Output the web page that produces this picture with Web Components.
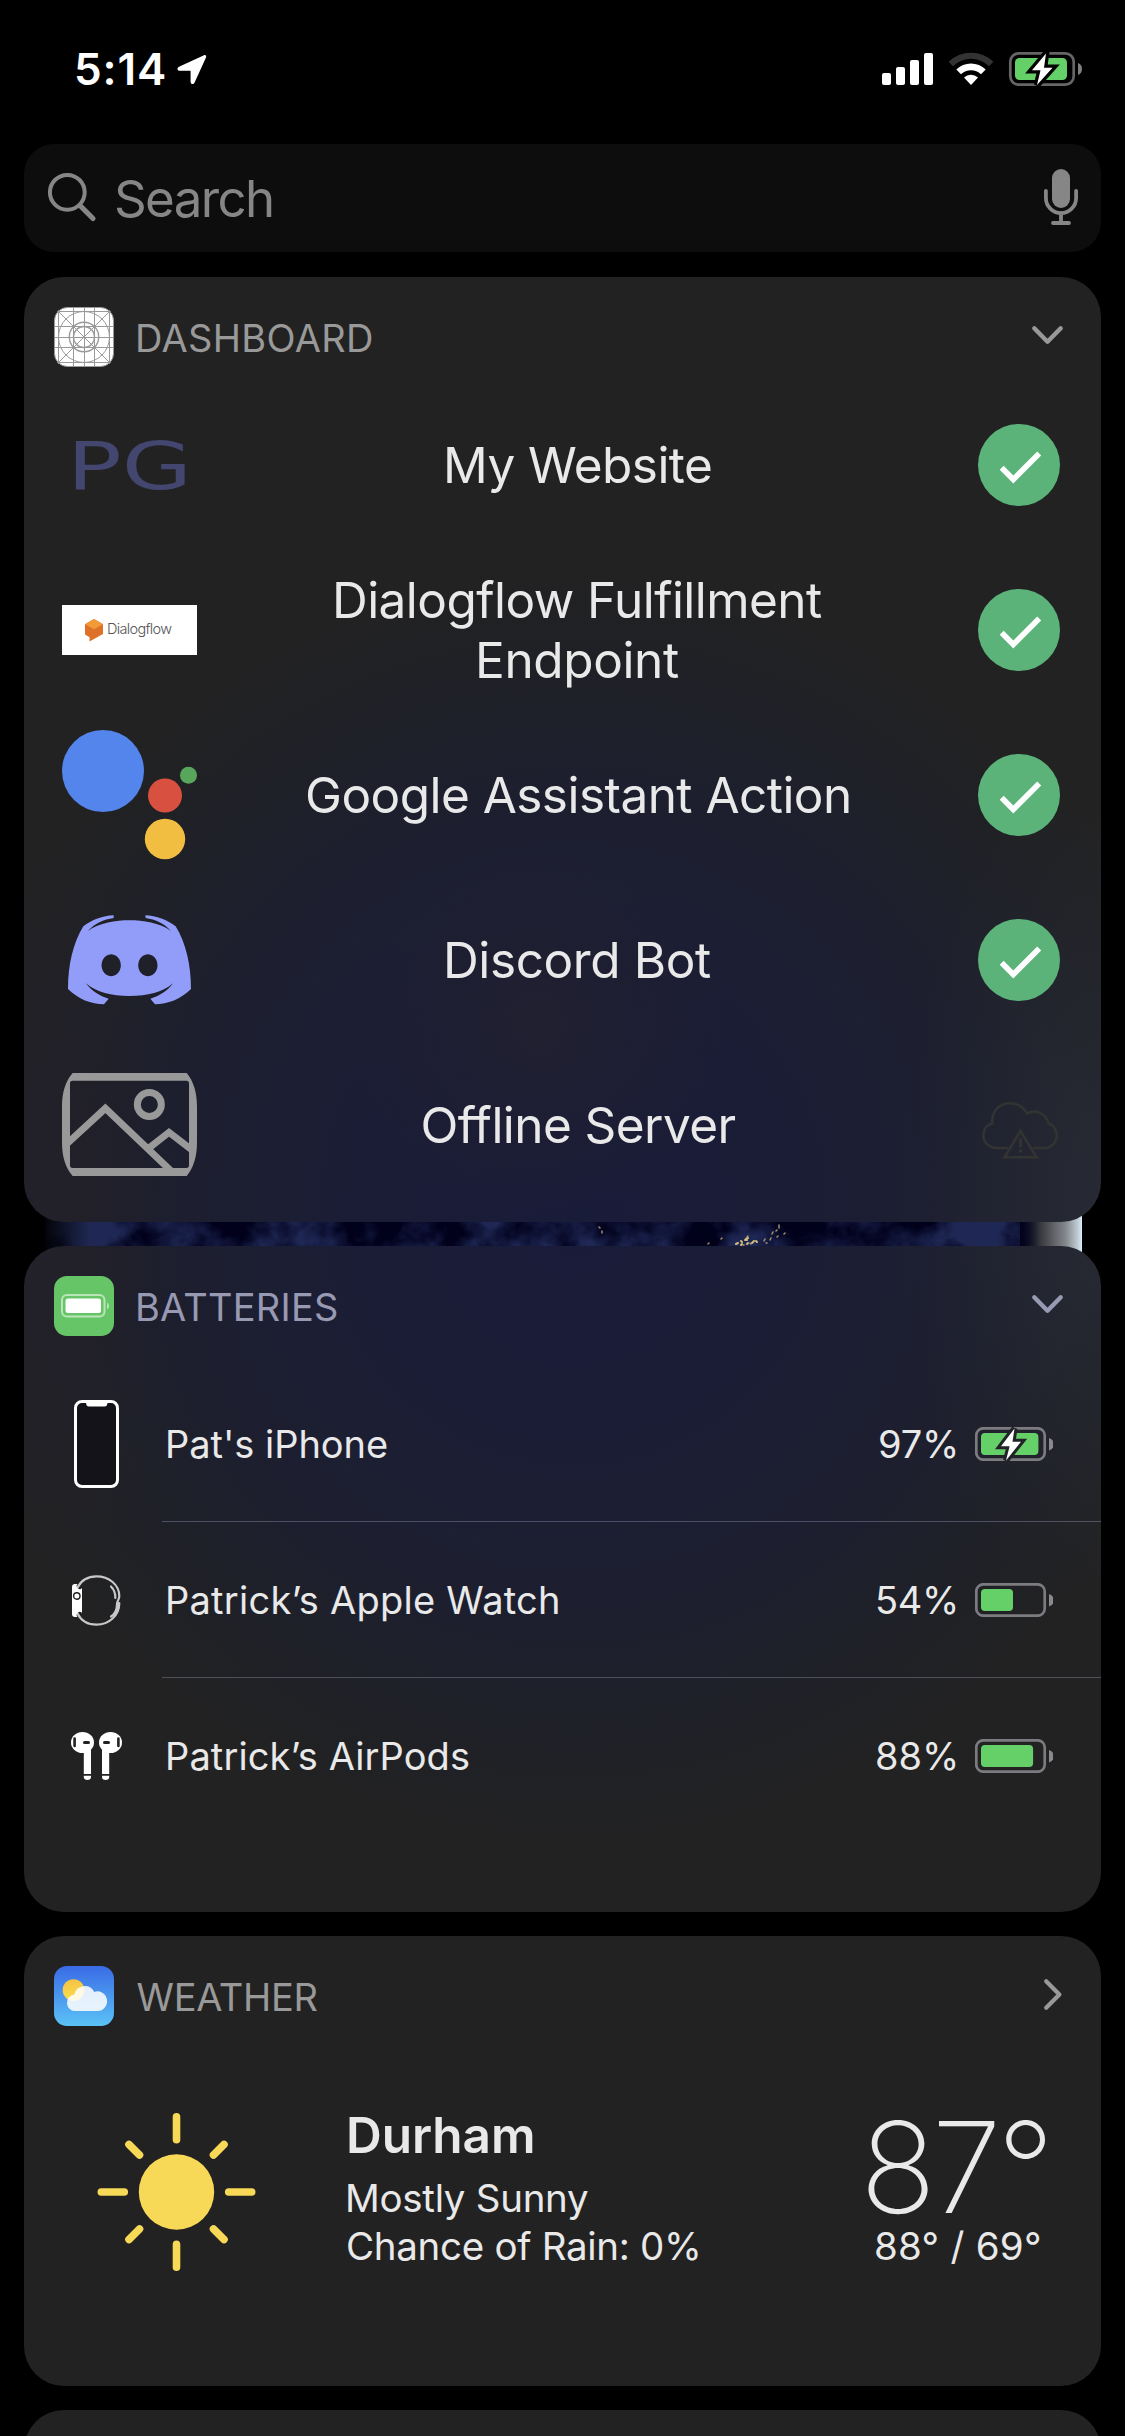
<!DOCTYPE html>
<html lang="en">
<head>
<meta charset="utf-8">
<title>Today View</title>
<style>
  html, body { margin: 0; background: #000; }
  body { width: 1125px; height: 2436px; overflow: hidden; font-family: Inter, "Liberation Sans", sans-serif; color: #e9e9e9; }
</style>
</head>
<body>
<today-view></today-view>
<script>
const define = (name, html, setup) => {
  const template = document.createElement('template');
  template.innerHTML = html;
  customElements.define(name, class extends HTMLElement {
    connectedCallback() {
      if (this.shadowRoot) return;
      const root = this.attachShadow({ mode: 'open' });
      root.append(template.content.cloneNode(true));
      if (setup) setup(this, root);
    }
  });
};

/* One line of text, tracked so that its ink spans exactly `w` pixels. */
const pen = document.createElement('canvas').getContext('2d');
define('fit-text', `<style>
  :host { display: block; flex: none; white-space: nowrap; }
  span { display: block; font-kerning: normal; }
</style><span><slot></slot></span>`, (el, root) => {
  const cs = getComputedStyle(el), text = el.textContent, w = +el.getAttribute('w');
  pen.font = `${cs.fontWeight} ${cs.fontSize} ${cs.fontFamily}`;
  const m = pen.measureText(text), ink = m.actualBoundingBoxLeft + m.actualBoundingBoxRight;
  const span = root.querySelector('span');
  span.style.letterSpacing = ((w - ink) / (text.length - 1)).toFixed(3) + 'px';
  span.style.marginLeft = m.actualBoundingBoxLeft.toFixed(2) + 'px';
  el.style.width = w + 'px';
});

/* ---------- icons ---------- */
const icon = (name, w, h, body) => define(name,
  `<style>:host{display:block;flex:none;width:${w}px;height:${h}px}svg{display:block;overflow:visible}</style>
   <svg width="${w}" height="${h}" viewBox="0 0 ${w} ${h}" fill="none">${body}</svg>`);

icon('icon-location', 30, 31, `<path d="M27 1.2 2 12.7c-2.4 1.2-1.8 4 .6 4H13c.4 0 .6.2.6.6v10.4c0 2.6 2.9 3.2 4 .7L29 3.4C29.700 1.700 28.500.500 27 1.200Z" fill="#fff"/>`);
icon('icon-signal', 51, 34, `<g fill="#fff"><rect y="21" width="9" height="12" rx="2"/><rect x="14" y="15" width="9" height="18" rx="2"/><rect x="28" y="8" width="9" height="25" rx="2"/><rect x="42" y="1" width="9" height="32" rx="2"/></g>`);
icon('icon-wifi', 46, 34, `<path d="M.6 9.800A32 32 0 0 1 45.400 9.800L41 14.300A25.500 25.500 0 0 0 5 14.300Z" fill="#333"/><path d="M8.300 17.500a21 21 0 0 1 29.400 0L33 22.200a14.500 14.500 0 0 0-20 0Z" fill="#fff"/><path d="M16 25.600a10 10 0 0 1 14 0L23 33Z" fill="#fff"/>`);
icon('icon-status-battery', 74, 34, `<rect x="1.300" y="1.300" width="63.400" height="31.400" rx="8.500" stroke="#666" stroke-width="2.700"/><path d="M69 11v12a6.500 6.500 0 0 0 0-12Z" fill="#808080"/><rect x="6" y="6" width="52" height="22" rx="4.500" fill="#65cf68"/><path d="M37 1.500 23 18.300h8.500L28 33 43.500 15.700H35Z" fill="#fff" stroke="#000" stroke-width="6.500" paint-order="stroke"/>`);
icon('icon-search', 48, 48, `<circle cx="19.300" cy="19.300" r="17.400" stroke="#868686" stroke-width="4"/><path d="m32 32.500 13 13" stroke="#868686" stroke-width="5.200" stroke-linecap="round"/>`);
icon('icon-mic', 34, 56, `<rect x="8" width="18" height="39" rx="9" fill="#868686"/><path d="M1.900 22v7a15.100 15.100 0 0 0 30.200 0v-7M17 44v9M9 54h16" stroke="#868686" stroke-width="3.800" stroke-linecap="round"/>`);
icon('icon-chevron-down', 31, 19, `<path d="M2.300 2.300 15.500 15.700 28.700 2.300" stroke="currentColor" stroke-width="4.400" stroke-linecap="round" stroke-linejoin="round"/>`);
icon('icon-chevron-right', 18, 31, `<path d="M2.200 2.200 15.400 15.500 2.200 28.800" stroke="currentColor" stroke-width="4.200" stroke-linecap="round" stroke-linejoin="round"/>`);
icon('icon-grid', 60, 60, `<clipPath id="c"><rect width="60" height="60" rx="13"/></clipPath><rect x=".5" y=".5" width="59" height="59" rx="13" fill="#fff" stroke="#999"/><g clip-path="url(#c)" stroke="#999" stroke-width="1"><path d="M4.500 0v60M19.500 0v60M30.500 0v60M40.500 0v60M55.500 0v60M0 4.500h60M0 19.500h60M0 30.500h60M0 40.500h60M0 55.500h60M4.500 4.500l51 51M55.500 4.500l-51 51"/><circle cx="30" cy="30" r="25.500"/><circle cx="30" cy="30" r="14.700" stroke-width="1.400"/><circle cx="30" cy="30" r="10.500" stroke-width="1.300"/></g>`);
icon('icon-batteries', 60, 60, `<rect width="60" height="60" rx="13" fill="#66c667"/><rect x="8" y="19" width="42.500" height="21.500" rx="5" stroke="#b9e5b9" stroke-width="2"/><rect x="11.500" y="22.500" width="35.500" height="14.500" rx="2.500" fill="#fff"/><path d="M53 26.500v7a4 4 0 0 0 0-7Z" fill="#b9e5b9"/>`);
icon('icon-weather', 60, 60, `<linearGradient id="s" x2="0" y2="1"><stop stop-color="#3a6be6"/><stop offset="1" stop-color="#5bc3f6"/></linearGradient><linearGradient id="y" x2="0" y2="1"><stop stop-color="#f6c244"/><stop offset="1" stop-color="#f9df4c"/></linearGradient><rect width="60" height="60" rx="13" fill="url(#s)"/><circle cx="19.500" cy="24" r="10.800" fill="url(#y)"/><path d="M22 45h21.500a9.800 9.800 0 1 0-3.300-19.100A10.700 10.700 0 0 0 20.200 28.500 8.300 8.300 0 0 0 22 45Z" fill="#fff" fill-opacity=".86"/>`);
icon('icon-check', 82, 82, `<circle cx="41" cy="41" r="41" fill="#5bb37a"/><path d="M23.700 43.800 35.300 55.500 61.200 29.500" stroke="#fff" stroke-width="5.600"/>`);
icon('icon-cloud-alert', 76, 57, `<g stroke="#333" stroke-width="2.600"><path d="M26 46H14.500C7 46 1.300 40 1.300 33.500 1.300 27 5 22.500 10.500 21.500 9 9 17.500 1.300 28 1.300c7.500 0 13.500 3.700 17 10.200 8.500-4.500 19-.5 21.500 10 5 1.200 8.200 6.500 8.200 12C74.700 40.500 69 46 62.500 46H51"/><path d="M38.500 29 22.500 55.300h32Z"/></g><path d="M37 36.500h3V45h-3ZM37 47.500h3v3h-3Z" fill="#333"/>`);
icon('logo-pg', 135, 60, `<text x="5" y="53.500" textLength="125" lengthAdjust="spacingAndGlyphs" font-family="DejaVu Sans, sans-serif" font-size="65" fill="#43466f">PG</text>`);
icon('logo-dialogflow', 135, 50, `<path d="M0 0h135v50H0Z" fill="#fff"/><path d="m32 14 9 5.300v9.700L27.500 36.500v-4.300L23 29.500V19.300Z" fill="#de7129"/><path d="m32 14 9 5.300-9 5-9-5Z" fill="#f19a37"/><text x="45" y="29.300" textLength="65" font-family="Inter, sans-serif" font-weight="300" font-size="14.500" fill="#555">Dialogflow</text>`);
icon('logo-assistant', 135, 129, `<circle cx="41" cy="41" r="41" fill="#5385ec"/><circle cx="103" cy="65.500" r="17" fill="#d85140"/><circle cx="126.500" cy="45.300" r="8.500" fill="#58a55c"/><circle cx="103" cy="109" r="20.200" fill="#f1be42"/>`);
icon('logo-discord', 123, 89.300, `<g transform="scale(.33333)"><path fill-rule="evenodd" fill="#929df9" d="M137 1C105 2 70 15 46 34 15 85 0 150 0 222c30 30 70 46 108 46l14-17c-27-8-52-23-68-46 31 27 76 38 130.500 38S284 232 315 205c-16 23-41 38-68 46l14 17c38 0 78-16 108-46 0-72-15-137-46-188C299 15 264 2 232 1l1 8c29 4 57 17 76 39-34-25-84-32-124.500-32S94 23 60 48c19-22 47-35 77-39ZM129.500 118a29 33 0 1 0 .1 0ZM239.500 118a29 33 0 1 0 .1 0Z"/></g>`);
icon('icon-picture', 135, 103, `<g transform="scale(.33333)"><path fill="#999" fill-rule="evenodd" d="M32 0H374C395 25 405 60 405 100V209C405 249 395 284 374 309H32C10 284 0 249 0 209V100C0 60 10 25 32 0ZM32 23a8 8 0 0 0-8 8V277a8 8 0 0 0 8 8H373a8 8 0 0 0 8-8V31a8 8 0 0 0-8-8Z"/><g stroke="#999" stroke-width="21"><circle cx="262" cy="94.500" r="36"/><path d="M14 213 130 106 325 292M262 224 321 178 391 232"/></g></g>`);
icon('icon-phone', 45, 88, `<rect x="1.500" y="1.500" width="42" height="85" rx="6.500" fill="#131319" stroke="#fff" stroke-width="3"/><path d="M12 2h21.500c0 3-1 4.500-3 4.500H15c-2 0-3-1.500-3-4.500Z" fill="#fff"/>`);
icon('icon-watch', 49, 51, `<path d="M5.500 12.500C9 5.500 16 1.300 24.500 1.300 37 1.300 47.300 10 47.300 21c0 4-2.300 5-2.300 8 0 5-2 10-6 12.500M5.500 38.500C9 45.500 16 49.700 24.500 49.700 37 49.700 47.300 40.500 47.300 28" stroke="#c8c8c8" stroke-width="2.200" stroke-linecap="round"/><path d="M39 11.500c3 3 4.500 7 4.300 11.500" stroke="#c8c8c8" stroke-width="2.200" stroke-linecap="round"/><path d="M3 9h2.500a3 3 0 0 0 4.500 4v25a3 3 0 0 0-4.500 4H3a3 3 0 0 1-3-3V12a3 3 0 0 1 3-3Z" fill="#fff"/><circle cx="4.800" cy="21" r="3.200" stroke="#222" stroke-width="1.400"/>`);
icon('icon-airpods', 51, 48, `<g id="l"><ellipse cx="11.500" cy="10.500" rx="11.500" ry="10.500" fill="#fff"/><path d="M12.800 19c3.200.5 5-.5 7.200-2v25h-7.200ZM12.800 43.800H20V45q0 3-3.600 3t-3.600-3Z" fill="#fff"/><path d="M13.500 10.400h4" stroke="#222" stroke-width="3" stroke-linecap="round"/><path d="M3.600 6.500v7.500" stroke="#222" stroke-width="2.600" stroke-linecap="round"/></g><use href="#l" transform="matrix(-1 0 0 1 51 0)"/>`);
icon('icon-sun', 160, 160, `<circle cx="79.500" cy="80" r="37.700" fill="#f8d857"/><path d="M79.500 4.800v23M79.500 132.200v23M4.300 80h23M131.700 80h23M32 32.500l10.500 10.500M116.500 117l10.500 10.500M127 32.500 116.500 43M42.500 117 32 127.500" stroke="#f8d857" stroke-width="7.600" stroke-linecap="round"/>`);

/* Battery gauge: `level` is the percentage, `charging` adds the bolt. */
define('battery-gauge', `<style>:host{display:block;flex:none;width:78px;height:34px}svg{display:block}</style>
<svg width="78" height="34" fill="none"><rect x="1.300" y="1.300" width="68.400" height="31.400" rx="7" stroke="#7c7c80" stroke-width="2.700"/><path d="M74 11v12.500a6.500 6.500 0 0 0 0-12.500Z" fill="#8a8a8e"/><rect class="fill" x="6" y="6" height="22" rx="4" fill="#65cf68"/><path class="bolt" d="M39.500 1.500 26 19.300h8.600L31 33.500 46 14.700H37.500Z" fill="#fff" stroke="#222229" stroke-width="6" paint-order="stroke"/></svg>`, (el, root) => {
  root.querySelector('.fill').setAttribute('width', (59.200 * el.getAttribute('level') / 100).toFixed(1));
  if (!el.hasAttribute('charging')) root.querySelector('.bolt').remove();
});

/* ---------- bars ---------- */
define('status-bar', `<style>
  :host { display: flex; flex: none; box-sizing: border-box; align-items: center; justify-content: space-between; height: 138px; padding: 0 42px 0 76px; margin-bottom: 6px; color: #fff; }
  div { display: flex; align-items: center; }
  .time { font-size: 44px; font-weight: 600; line-height: 54px; gap: 12px; }
  .system { gap: 15px; }
</style>
<div class="time"><fit-text w="89">5:14</fit-text><icon-location></icon-location></div>
<div class="system"><icon-signal></icon-signal><icon-wifi></icon-wifi><icon-status-battery></icon-status-battery></div>`);

define('search-bar', `<style>
  :host { display: flex; flex: none; align-items: center; height: 108px; margin: 0 24px 25px; padding: 0 23px 0 24px; border-radius: 30px; background: #0d0d0d; color: #868686; font-size: 51px; line-height: 60px; box-sizing: border-box; }
  fit-text { margin: 1px auto 0 20px; }
  icon-search, icon-mic { margin-bottom: 2px; }
</style>
<icon-search></icon-search><fit-text w="156">Search</fit-text><icon-mic></icon-mic>`);

/* ---------- widgets ---------- */
define('widget-card', `<style>
  :host { display: block; box-sizing: border-box; flex: none; position: relative; z-index: 1; margin: 0 24px; height: var(--h); border-radius: 40px; overflow: hidden; background-color: #222;
    background-image: radial-gradient(circle at 515px calc(750px - var(--shift)), rgba(36,33,44,.65), rgba(36,33,44,0) 190px),
      radial-gradient(ellipse 200px 420px at 1077px calc(920px - var(--shift)), rgba(40,43,54,.85), rgba(40,43,54,0)),
      radial-gradient(ellipse 160px 380px at 0px calc(940px - var(--shift)), rgba(36,32,42,.8), rgba(36,32,42,0)),
      radial-gradient(ellipse 640px 650px at 550px calc(930px - var(--shift)), #191c39 0, #1b1d36 35%, #1d1f2e 66%, #202125 87%, #222 100%); }
  header { display: flex; align-items: center; height: 60px; padding: 30px 38px 0 30px; color: var(--tint, #999); font-size: 38px; line-height: 48px; }
  .title { margin: 1px auto 0 var(--title-gap, 24px); }
  .chevron { margin-top: -4px; }
</style>
<header><slot name="icon"></slot><div class="title"><slot name="title"></slot></div><div class="chevron"><slot name="chevron"></slot></div></header>
<slot></slot>`);

define('service-row', `<style>
  :host { display: flex; align-items: center; height: 165px; padding: 0 41px 0 38px; font-size: 49.500px; line-height: 60px; }
  .logo { width: 135px; display: flex; justify-content: center; flex: none; }
  .name { flex: 1; display: flex; flex-direction: column; align-items: center; padding-right: 17px; }
  .state { width: 82px; display: flex; justify-content: center; }
</style>
<div class="logo"><slot name="logo"></slot></div><div class="name"><slot></slot></div><div class="state"><slot name="state"></slot></div>`);

define('device-row', `<style>
  :host { display: flex; height: 156px; font-size: 38px; line-height: 48px; }
  .icon { width: 145px; margin-right: -7px; display: flex; align-items: center; justify-content: center; }
  .body { flex: 1; display: flex; align-items: center; padding: 0 48px 0 6px; gap: 19px; border-bottom: 1px solid rgba(205,205,240,.28); }
  :host([last]) .body { border-color: transparent; }
  .name { margin-right: auto; }
</style>
<div class="icon"><slot name="icon"></slot></div>
<div class="body"><div class="name"><slot></slot></div><slot name="level"></slot><slot name="gauge"></slot></div>`);

define('weather-report', `<style>
  :host { display: flex; align-items: flex-start; padding: 79px 56px 0 73px; font-size: 38.500px; line-height: 48px; }
  icon-sun { margin-top: 7px; }
  .place { margin-left: 91px; margin-right: auto; }
  .city { font-size: 49.500px; font-weight: 600; line-height: 60px; margin: 0 0 9px 1px; }
  .temp { display: flex; flex-direction: column; align-items: flex-end; }
  .now { font-size: 126px; font-weight: 240; line-height: 110px; margin: 7px 0 0; }
  .range { margin-right: 5px; }
</style>
<icon-sun></icon-sun>
<div class="place"><fit-text class="city" w="184">Durham</fit-text><fit-text w="240">Mostly Sunny</fit-text><fit-text w="350">Chance of Rain: 0%</fit-text></div>
<div class="temp"><fit-text class="now" w="177">87°</fit-text><fit-text class="range" w="164">88° / 69°</fit-text></div>`);

/* Slice of the Earth wallpaper visible between two widgets. */
define('earth-strip', `<style>:host{display:block;flex:none;height:64px;margin:-20px 0}svg{display:block}</style>
<svg width="1125" height="64" viewBox="0 0 1125 64">
  <defs>
    <filter id="clouds" x="0" y="0" width="100%" height="100%" color-interpolation-filters="sRGB"><feTurbulence type="fractalNoise" baseFrequency=".018 .02" numOctaves="5" seed="8"/><feColorMatrix values="0 0 0 0 .12  0 0 0 0 .155  0 0 0 0 .33  3.200 0 0 0 -1.080"/></filter>
    <linearGradient id="limb"><stop stop-color="#000018" stop-opacity="0"/><stop offset=".35" stop-color="#38383e"/><stop offset=".75" stop-color="#84898d"/><stop offset=".95" stop-color="#c5d3db"/><stop offset="1" stop-color="#d9efff"/></linearGradient>
    <linearGradient id="dusk"><stop stop-color="#000"/><stop offset="1" stop-color="#000" stop-opacity="0"/></linearGradient>
  </defs>
  <rect x="45" width="1036" height="64" fill="#01011c"/>
  <rect x="45" width="975" height="64" filter="url(#clouds)"/>
  <rect x="40" width="50" height="64" fill="url(#dusk)"/>
  <rect x="1018" width="64" height="64" fill="url(#limb)"/>
  <g stroke="#d3bd7c" stroke-linecap="round" fill="none"><path d="M736 42l2-1m3-2l1 1m3-2l2 0m-6 5l1-1m5 0l1-1m4 0l2-2m-8-2l2-1m8 3l1 1" stroke-width="2"/><path d="M764 39l1-2m5 1l1-2m1-4l1-2m4 5l1-1m-12 7l1 0m17-9l1-1m-42 12h1m6-2l1 1m28-16v-3m-3 6l1-1m-30 7l1-1m-40 8l1-1m12-4l1-1m-120-5v-2m-3-4l1 1" stroke-width="1.500" opacity=".75"/></g>
</svg>`);

define('today-view', `<style>
  :host { display: flex; flex-direction: column; width: 1125px; height: 2436px; overflow: hidden; background: #000; }
  .rows { padding-top: 15px; }
  .gap { height: 24px; flex: none; }
</style>
<status-bar></status-bar>
<search-bar></search-bar>
<widget-card style="--h:945px;--shift:0px">
  <icon-grid slot="icon"></icon-grid><fit-text slot="title" w="234">DASHBOARD</fit-text><icon-chevron-down slot="chevron"></icon-chevron-down>
  <div class="rows">
    <service-row><logo-pg slot="logo"></logo-pg><fit-text w="264">My Website</fit-text><icon-check slot="state"></icon-check></service-row>
    <service-row><logo-dialogflow slot="logo"></logo-dialogflow><fit-text w="486">Dialogflow Fulfillment</fit-text><fit-text w="200">Endpoint</fit-text><icon-check slot="state"></icon-check></service-row>
    <service-row><logo-assistant slot="logo"></logo-assistant><fit-text w="542" style="margin-right:2px">Google Assistant Action</fit-text><icon-check slot="state"></icon-check></service-row>
    <service-row><logo-discord slot="logo"></logo-discord><fit-text w="264">Discord Bot</fit-text><icon-check slot="state"></icon-check></service-row>
    <service-row><icon-picture slot="logo"></icon-picture><fit-text w="313">Offline Server</fit-text><icon-cloud-alert slot="state" style="margin:12px 0 0 2px"></icon-cloud-alert></service-row>
  </div>
</widget-card>
<earth-strip></earth-strip>
<widget-card style="--h:666px;--shift:969px;--tint:#9899b3">
  <icon-batteries slot="icon"></icon-batteries><fit-text slot="title" w="199">BATTERIES</fit-text><icon-chevron-down slot="chevron"></icon-chevron-down>
  <div class="rows" style="padding-top:30px">
    <device-row><icon-phone slot="icon"></icon-phone><fit-text w="219">Pat's iPhone</fit-text><fit-text slot="level" w="76">97%</fit-text><battery-gauge slot="gauge" level="97" charging></battery-gauge></device-row>
    <device-row><icon-watch slot="icon"></icon-watch><fit-text w="390">Patrick’s Apple Watch</fit-text><fit-text slot="level" w="79">54%</fit-text><battery-gauge slot="gauge" level="54"></battery-gauge></device-row>
    <device-row last><icon-airpods slot="icon"></icon-airpods><fit-text w="301">Patrick’s AirPods</fit-text><fit-text slot="level" w="79">88%</fit-text><battery-gauge slot="gauge" level="88"></battery-gauge></device-row>
  </div>
</widget-card>
<div class="gap"></div>
<widget-card style="--h:450px;--shift:3000px;--title-gap:22.500px">
  <icon-weather slot="icon"></icon-weather><fit-text slot="title" w="181">WEATHER</fit-text><icon-chevron-right slot="chevron" style="margin-right:1px"></icon-chevron-right>
  <weather-report></weather-report>
</widget-card>
<div class="gap"></div>
<widget-card style="--h:200px;--shift:3000px"></widget-card>`);
</script>
</body>
</html>
